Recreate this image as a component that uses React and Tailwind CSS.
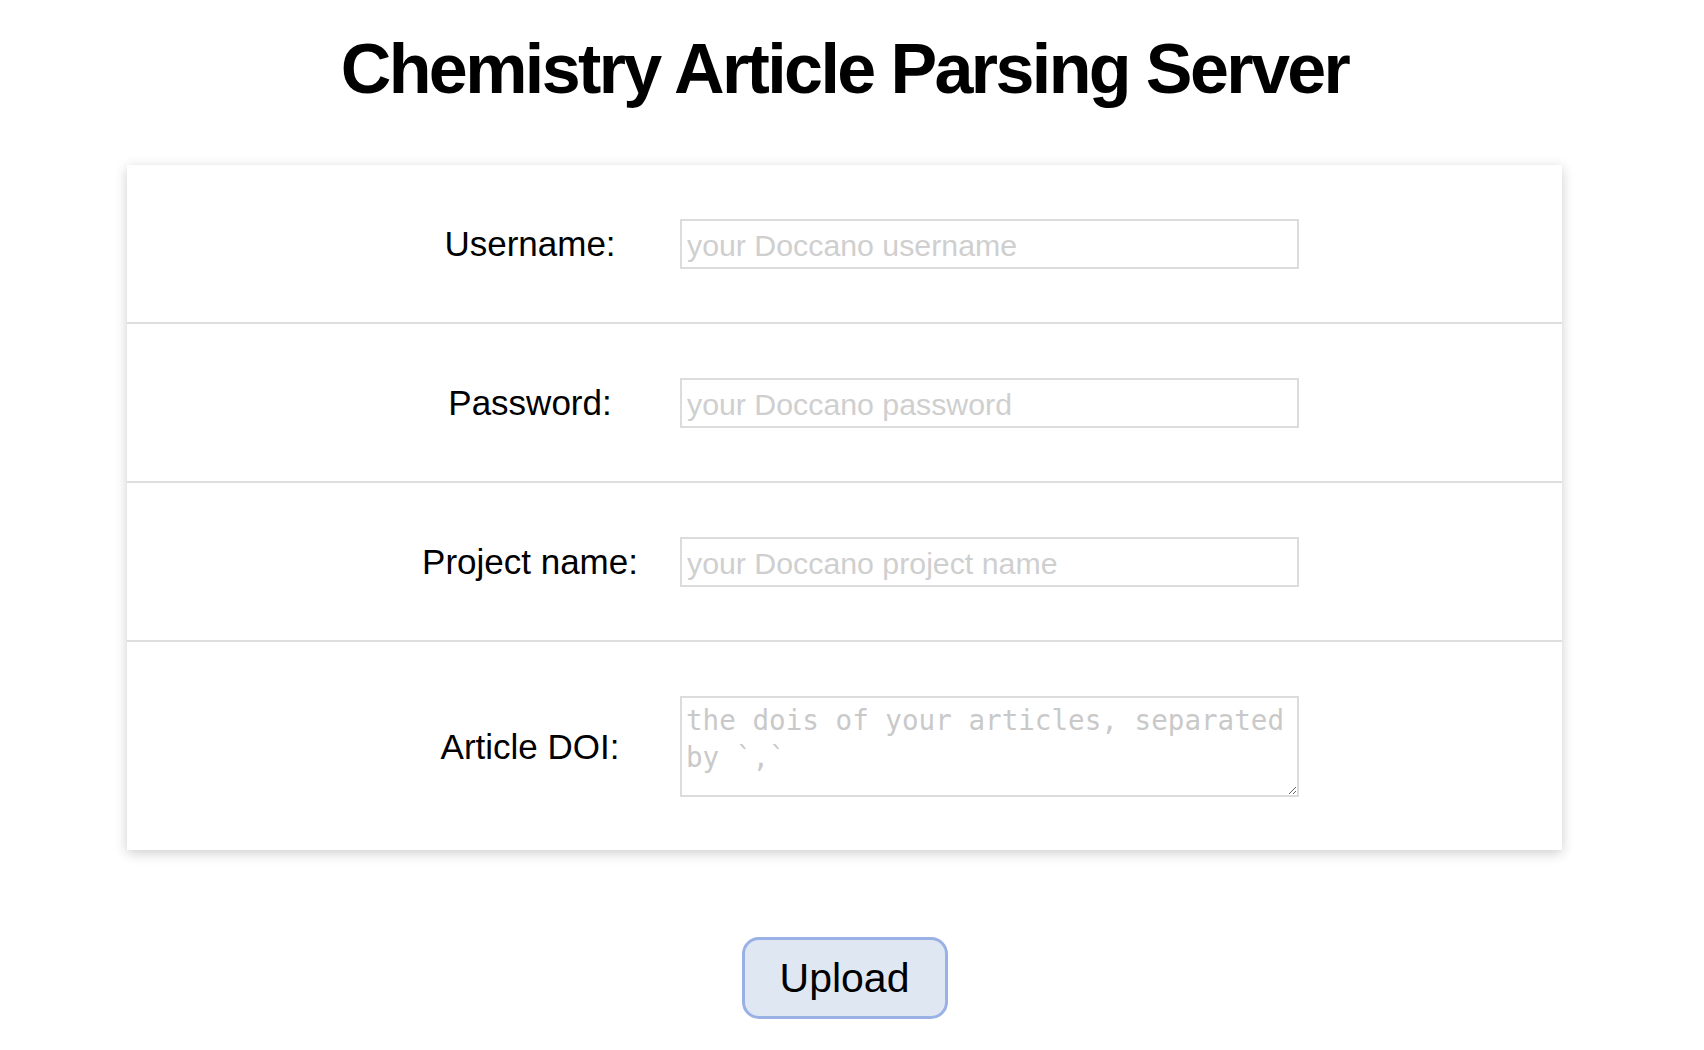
import React from 'react';

const FIELDS = [
  { id: 'username', label: 'Username:', placeholder: 'your Doccano username', type: 'text' },
  { id: 'password', label: 'Password:', placeholder: 'your Doccano password', type: 'password' },
  { id: 'project', label: 'Project name:', placeholder: 'your Doccano project name', type: 'text' },
];

export default function App() {
  return (
    <div className="min-h-screen bg-white pr-[15px] font-['Liberation_Sans',Arial,sans-serif] text-black">
      <h1 className="pt-[30px] text-center text-[70px] leading-[78px] font-bold tracking-[-2.6px]">
        Chemistry Article Parsing Server
      </h1>

      <form className="flex flex-col items-center" onSubmit={e => e.preventDefault()}>
        <div className="mt-[57px] w-[1435px] bg-white shadow-[0_3px_12px_rgba(0,0,0,0.2)]">
          {FIELDS.map(f => (
            <div key={f.id} className="flex items-center border-b-2 border-[#dedede] pt-[54px] pb-[53px] pl-[253px]">
              <label htmlFor={f.id} className="w-[300px] text-center text-[35px] leading-[40px]">
                {f.label}
              </label>
              <input
                id={f.id}
                type={f.type}
                placeholder={f.placeholder}
                className="h-[50px] w-[619px] border-2 border-[#dcdcdc] px-[5px] pt-[3px] text-[30.3px] placeholder:text-[#cfcfcf] outline-none"
              />
            </div>
          ))}

          {/* DOI textarea row */}
          <div className="flex items-center pt-[54px] pb-[53px] pl-[253px]">
            <label htmlFor="doi" className="w-[300px] text-center text-[35px] leading-[40px]">
              Article DOI:
            </label>
            <textarea
              id="doi"
              placeholder="the dois of your articles, separated by `,`"
              className="block h-[101px] w-[619px] border-2 border-[#dcdcdc] px-[4px] py-[4px] font-['DejaVu_Sans_Mono',monospace] text-[27.6px] leading-[37px] placeholder:text-[#c9c9c9] outline-none"
            />
          </div>
        </div>

        <button
          type="submit"
          className="mt-[87px] h-[82px] w-[206px] rounded-[17px] border-[3px] border-[#9ab1e6] bg-[#dfe7f2] text-[41px] leading-none"
        >
          Upload
        </button>
      </form>
    </div>
  );
}
